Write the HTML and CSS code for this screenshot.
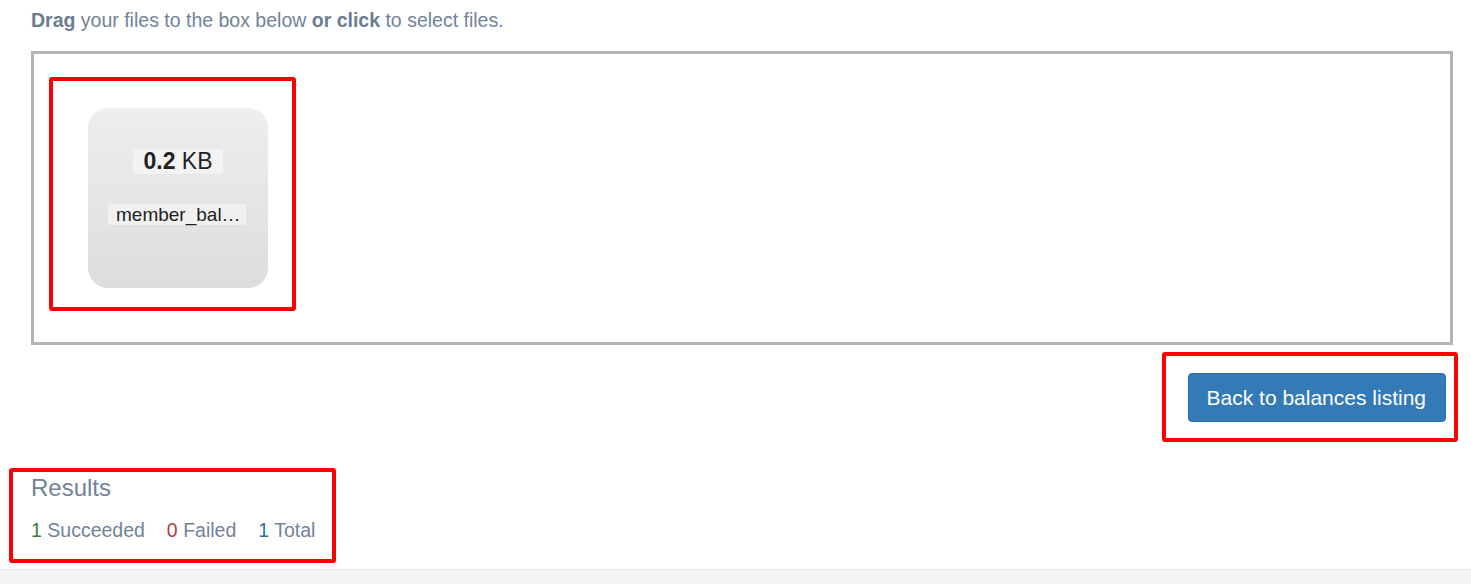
FILE: index.html
```html
<!DOCTYPE html>
<html lang="en">
<head>
<meta charset="utf-8">
<title>Upload balances</title>
<link rel="stylesheet" href="styles.css">
</head>
<body>
<div class="page">
  <main class="content">
    <p class="hint"><b>Drag</b> your files to the box below <b>or click</b> to select files.</p>
    <div class="dropzone">
      <div class="preview">
        <div class="size"><span><strong>0.2</strong> KB</span></div>
        <div class="filename"><span>member_bal…</span></div>
      </div>
    </div>
    <div class="actions">
      <a class="btn" href="#">Back to balances listing</a>
    </div>
    <section class="results">
      <h3 class="results-title">Results</h3>
      <div class="counts">
        <span class="count"><span class="num ok">1</span> Succeeded</span>
        <span class="count"><span class="num fail">0</span> Failed</span>
        <span class="count"><span class="num total">1</span> Total</span>
      </div>
    </section>
  </main>
  <footer class="footer"></footer>
</div>
<div class="mark mark-preview"></div>
<div class="mark mark-button"></div>
<div class="mark mark-results"></div>
</body>
</html>
```

FILE: styles.css
```css
* { box-sizing: border-box; }
html, body { margin: 0; padding: 0; background: #fff; }
body {
  font-family: "Liberation Sans", Arial, sans-serif;
  color: #71839a;
  position: relative;
  height: 584px;
  overflow: hidden;
}
.page { display: flex; flex-direction: column; min-height: 584px; }
.content { padding: 0 18px 0 31px; flex: 1; }
.hint {
  margin: 0;
  padding-top: 9px;
  font-size: 19.5px;
  line-height: 23px;
  height: 51px;
}
.hint b { font-weight: bold; color: #6b7d93; }
.dropzone {
  border: 3px solid #b3b3b3;
  height: 294px;
  padding: 54px;
  display: flex;
}
.preview {
  width: 180px;
  height: 180px;
  border-radius: 20px;
  background: linear-gradient(to bottom, #eeeeee, #dddddd);
  color: #222;
  padding-top: 41px;
  display: flex;
  flex-direction: column;
  align-items: center;
}
.size { font-size: 23px; line-height: 25px; }
.size span {
  display: inline-block;
  background: rgba(255,255,255,0.45);
  border-radius: 3px;
  padding: 0 10px;
}
.size strong { font-weight: bold; }
.filename {
  margin-top: 29px;
  align-self: flex-start;
  margin-left: 20px;
  width: 138px;
  overflow: hidden;
  white-space: nowrap;
  font-size: 19px;
  line-height: 23px;
}
.filename span {
  background: rgba(255,255,255,0.45);
  border-radius: 3px;
  padding: 0 8px;
}
.actions {
  display: flex;
  justify-content: flex-end;
  padding-top: 28px;
  padding-right: 7px;
}
.btn {
  display: inline-block;
  background: #337ab7;
  border: 1px solid #2e6da4;
  border-radius: 4px;
  color: #fff;
  text-decoration: none;
  font-size: 21px;
  line-height: 24px;
  padding: 12px 19px 12px 18px;
  height: 49px;
}
.results { padding-top: 52px; }
.results-title {
  margin: 0;
  font-size: 24px;
  font-weight: normal;
  line-height: 28px;
}
.counts {
  display: flex;
  gap: 22px;
  margin-top: 17px;
  font-size: 19.5px;
  line-height: 23px;
}
.num.ok { color: #3c763d; }
.num.fail { color: #a94442; }
.num.total { color: #31708f; }
.footer {
  height: 15px;
  background: #f5f5f5;
  border-top: 1px solid #e5e5e5;
  margin-top: auto;
}
.mark {
  position: absolute;
  border: 4px solid #ff0000;
  border-radius: 3px;
}
.mark-preview { left: 49px; top: 77px; width: 247px; height: 234px; }
.mark-button { left: 1162px; top: 352px; width: 296px; height: 90px; }
.mark-results { left: 9px; top: 468px; width: 327px; height: 95px; }
```
